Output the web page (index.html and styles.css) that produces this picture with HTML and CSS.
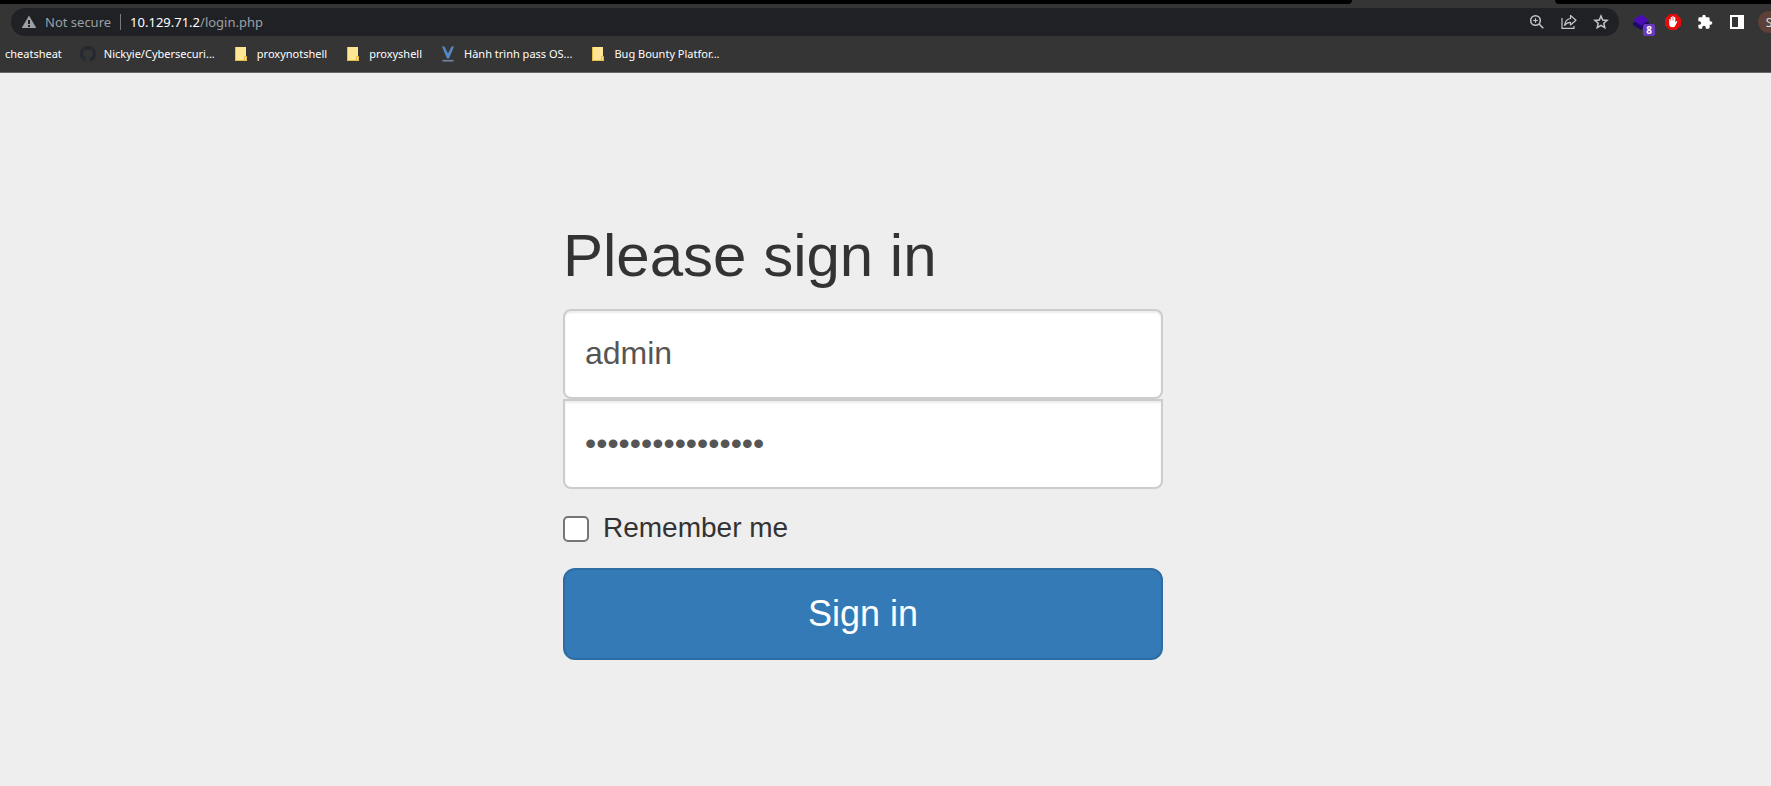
FILE: index.html
```html
<!DOCTYPE html>
<html lang="en">
<head>
<meta charset="utf-8">
<title>Login</title>
<link rel="stylesheet" href="styles.css">
</head>
<body>
<header class="browser">
  <div class="tabstrip"><span class="strip-left"></span><span class="strip-right"></span></div>
  <div class="toolbar">
    <div class="omnibox">
      <svg class="warn" width="16" height="16" viewBox="0 0 16 16"><path d="M8 1.5 15.300 14H.7z" fill="#9aa0a6"/><path d="M7 6h2v4H7zM7 11h2v2H7z" fill="#202124"/></svg>
      <span class="security">Not secure</span>
      <span class="address"><span class="host">10.129.71.2</span>/login.php</span>
      <button class="icon" type="button" aria-label="Zoom"><svg width="16" height="16" viewBox="0 0 16 16" fill="none" stroke="#c4c6c9" stroke-width="1.5"><circle cx="6.500" cy="6.500" r="4.800"/><path d="M10 10l4.300 4.300"/><path d="M6.500 4.200v4.600M4.200 6.500h4.600" stroke-width="1.200"/></svg></button>
      <button class="icon" type="button" aria-label="Share"><svg width="16" height="16" viewBox="0 0 16 16" fill="none" stroke="#c4c6c9" stroke-width="1.200"><path d="M1 4v10.400h12V12"/><path d="M9.500 1.500v3C6 5 4 7.300 3.600 11.300 5 9.300 6.800 8.300 9.500 8.300V11L15 6.200z" stroke-linejoin="round"/></svg></button>
      <button class="icon" type="button" aria-label="Bookmark"><svg width="16" height="16" viewBox="0 0 16 16" fill="none" stroke="#c4c6c9" stroke-width="1.500"><path d="M8 2l1.700 4 4.400.4-3.300 2.900 1 4.300L8 11.300l-3.800 2.300 1-4.300L1.900 6.400 6.300 6z"/></svg></button>
    </div>
    <div class="extensions">
      <button class="icon" type="button" aria-label="Layers extension"><svg width="16" height="16" viewBox="0 0 16 16"><path d="M0 8v3l8 5 8-5V8z" fill="#1f0a6b"/><path d="M8 .5 16 6 8 11.500 0 6z" fill="#4a0db5"/></svg><span class="badge">8</span></button>
      <button class="icon" type="button" aria-label="Ad blocker"><svg width="16" height="16" viewBox="0 0 16 16"><path d="M4.700 0h6.600L16 4.700v6.600L11.300 16H4.700L0 11.300V4.700z" fill="#e40d0d"/><path d="M4.200 8V5.300q.7-.8 1.200 0V7h.3V3.200q.7-.8 1.300 0V6.500h.3V2.500q.7-.8 1.400 0v4H9V3.300q.7-.8 1.300 0V8.500l1-1.200q1-.5 1.100.3L10.600 11q-.6 2.300-2.800 2.300-3.600 0-3.600-3.300z" fill="#fff"/></svg></button>
      <button class="icon" type="button" aria-label="Extensions"><svg width="16" height="16" viewBox="0 0 24 24"><path d="M20.500 11H19V7a2 2 0 0 0-2-2h-4V3.500a2.500 2.500 0 0 0-5 0V5H4a2 2 0 0 0-2 2v3.800h1.500a2.700 2.700 0 0 1 0 5.400H2V20a2 2 0 0 0 2 2h3.800v-1.500a2.700 2.700 0 0 1 5.400 0V22H17a2 2 0 0 0 2-2v-4h1.500a2.500 2.500 0 0 0 0-5z" fill="#fff"/></svg></button>
      <button class="icon" type="button" aria-label="Side panel"><svg width="16" height="16" viewBox="0 0 16 16"><path d="M1 1h14v14H1zM3 3v10h6V3z" fill="#fff" fill-rule="evenodd"/></svg></button>
      <button class="avatar" type="button" aria-label="Profile">S</button>
    </div>
  </div>
  <nav class="bookmarks">
    <a href="#">cheatsheat</a>
    <a href="#"><svg width="16" height="16" viewBox="0 0 16 16"><path d="M8 0C3.580 0 0 3.580 0 8c0 3.540 2.290 6.530 5.470 7.590.4.070.55-.17.55-.38 0-.19-.01-.82-.01-1.490-2.010.37-2.530-.49-2.690-.94-.09-.23-.48-.94-.82-1.130-.28-.15-.68-.52-.01-.53.63-.01 1.080.58 1.230.82.72 1.210 1.870.87 2.330.66.070-.52.28-.87.51-1.070-1.780-.2-3.640-.89-3.640-3.950 0-.87.31-1.590.82-2.150-.08-.2-.36-1.020.08-2.120 0 0 .67-.21 2.200.82a7.600 7.600 0 0 1 4 0c1.530-1.040 2.200-.82 2.200-.82.44 1.100.16 1.920.08 2.120.51.56.82 1.270.82 2.150 0 3.070-1.870 3.750-3.650 3.950.29.25.54.73.54 1.480 0 1.070-.01 1.930-.01 2.200 0 .21.150.46.55.38A8 8 0 0 0 16 8c0-4.420-3.580-8-8-8z" fill="#24292f"/></svg>Nickyie/Cybersecuri...</a>
    <a href="#"><svg width="16" height="16" viewBox="0 0 16 16"><path d="M2 1h11v9.500h1V15H2z" fill="#ffe694"/><path d="M2.500 1v13.500h9v-4h2v4h-2" fill="none" stroke="#e6bd45"/></svg>proxynotshell</a>
    <a href="#"><svg width="16" height="16" viewBox="0 0 16 16"><path d="M2 1h11v9.500h1V15H2z" fill="#ffe694"/><path d="M2.500 1v13.500h9v-4h2v4h-2" fill="none" stroke="#e6bd45"/></svg>proxyshell</a>
    <a href="#"><svg width="16" height="16" viewBox="0 0 16 16"><path d="M2 .5h2.500L8 7.500 11.500.5H14L9 12.500H7z" fill="#5488c4"/><path d="M2.500 14.700h11" stroke="#6e88a8" stroke-width="1.600"/></svg>Hành trình pass OS...</a>
    <a href="#"><svg width="16" height="16" viewBox="0 0 16 16"><path d="M2 1h11v9.500h1V15H2z" fill="#ffe694"/><path d="M2.500 1v13.500h9v-4h2v4h-2" fill="none" stroke="#e6bd45"/></svg>Bug Bounty Platfor...</a>
  </nav>
</header>
<main class="page">
  <form class="signin">
    <h2>Please sign in</h2>
    <input class="field" type="text" value="admin" aria-label="Username">
    <input class="field field-password" type="password" value="passwordpassword" aria-label="Password">
    <label class="remember"><input type="checkbox">Remember me</label>
    <button class="submit" type="button">Sign in</button>
  </form>
</main>
</body>
</html>
```
FILE: styles.css
```css
* { box-sizing: border-box; }

body {
  margin: 0;
  min-height: 100vh;
  background: #eee;
  color: #333;
  font-family: "Liberation Sans", Arial, sans-serif;
  overflow-x: hidden;
}

button { font-family: inherit; cursor: pointer; }

/* Browser chrome */
.browser {
  background: #353535;
  border-bottom: 1px solid #666;
  font-family: "Noto Sans", "Open Sans", sans-serif;
  overflow: hidden;
}

.tabstrip { display: flex; justify-content: space-between; height: 4px; }
.strip-left { flex: 1; background: #000; border-bottom-right-radius: 4px; }
.strip-right { width: 216px; margin-left: 203px; background: #000; border-bottom-left-radius: 4px; }

.toolbar { display: flex; align-items: center; padding: 4px 0 0 11px; }

.omnibox {
  flex: 1;
  display: flex;
  align-items: center;
  height: 28px;
  padding: 0 10px;
  border-radius: 14px;
  background: #202124;
  color: #9aa0a6;
  font-size: 13px;
  line-height: 16px;
}

.security { margin-left: 8px; padding-right: 9px; border-right: 1px solid #777a7d; }
.address { flex: 1; margin-left: 9px; }
.host { color: #fff; }

.icon {
  position: relative;
  display: block;
  width: 16px;
  height: 16px;
  padding: 0;
  border: 0;
  background: none;
}
.icon svg { display: block; }
.omnibox .icon + .icon { margin-left: 16px; }

.extensions { display: flex; align-items: center; gap: 16px; width: 152px; padding-left: 14px; }

.badge {
  position: absolute;
  left: 10px;
  top: 10px;
  width: 12px;
  height: 12px;
  border-radius: 2px;
  background: #6c38c0;
  color: #fff;
  font-size: 10px;
  font-weight: 700;
  line-height: 12px;
  text-align: center;
}

.avatar {
  flex: none;
  width: 22px;
  height: 22px;
  padding: 0;
  margin-left: -3px;
  border: 0;
  border-radius: 50%;
  background: #5d4037;
  color: #ddd;
  font-size: 12px;
}

.bookmarks { display: flex; gap: 18px; height: 36px; align-items: center; padding-left: 5px; }
.bookmarks a {
  display: flex;
  align-items: center;
  gap: 8px;
  color: #fff;
  font-size: 11px;
  line-height: 16px;
  text-decoration: none;
  white-space: nowrap;
}

/* Login page */
.page { padding: 150px 45px 80px 0; }

.signin { display: flex; flex-direction: column; width: 100%; max-width: 600px; margin: 0 auto; }

.signin h2 { margin: 0 0 20px; font-size: 60px; font-weight: 400; line-height: 66px; }

.field {
  width: 100%;
  height: 90px;
  padding: 20px 20px 22px;
  border: 2px solid #ccc;
  border-radius: 8px;
  background: #fff;
  box-shadow: inset 0 2px 2px rgba(0, 0, 0, 0.075);
  color: #555;
  font-family: inherit;
  font-size: 32px;
}
.field-password { margin-bottom: 19px; border-radius: 0 0 8px 8px; }

.remember {
  display: flex;
  align-items: center;
  gap: 14px;
  margin-bottom: 20px;
  font-size: 28px;
  line-height: 40px;
}
.remember input {
  appearance: none;
  width: 26px;
  height: 26px;
  margin: 2px 0 0;
  border: 2px solid #767676;
  border-radius: 5px;
  background: #fff;
}
.remember input:checked { background: #337ab7; }

.submit {
  height: 92px;
  border: 2px solid #2e6da4;
  border-radius: 12px;
  background: #337ab7;
  color: #fff;
  font-size: 36px;
  line-height: 48px;
}
```
